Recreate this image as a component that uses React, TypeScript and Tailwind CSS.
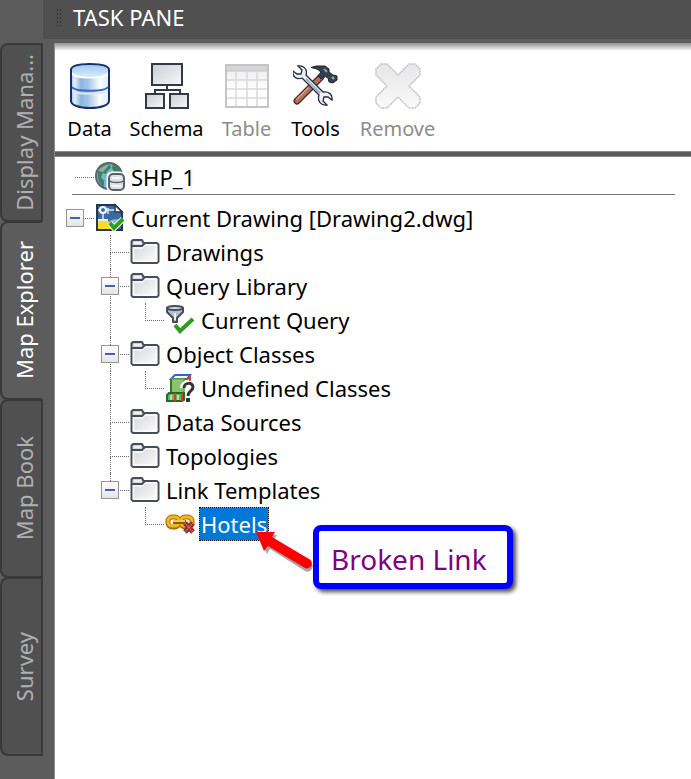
import type { ReactNode } from "react";

/* ---------- toolbar icons ---------- */

function DataIcon() {
  return (
    <svg width="42" height="48" viewBox="0 0 42 48" aria-hidden="true">
      <defs>
        <linearGradient id="cyl" x1="0" x2="1" y1="0" y2="0">
          <stop offset="0" stopColor="#a9c9ec" />
          <stop offset="0.1" stopColor="#e3f0fb" />
          <stop offset="0.26" stopColor="#8db4df" />
          <stop offset="0.45" stopColor="#a4c5e8" />
          <stop offset="0.75" stopColor="#fbfdff" />
          <stop offset="1" stopColor="#dfeaf6" />
        </linearGradient>
        <linearGradient id="cylTop" x1="0" x2="0" y1="0" y2="1">
          <stop offset="0" stopColor="#9cc6f2" />
          <stop offset="1" stopColor="#d9ecfd" />
        </linearGradient>
      </defs>
      <path d="M2 8v31c0 4 8 7 19 7s19-3 19-7V8z" fill="url(#cyl)" />
      <path d="M3 10c2 6 34 6 36 0" fill="none" stroke="#ffffff" strokeWidth="4" />
      <path d="M2 8c0-4 8-6 19-6s19 2 19 6-8 7-19 7-19-3-19-7z" fill="url(#cylTop)" />
      <path d="M3 25c3 5 33 5 36 0" fill="none" stroke="#3a6cc0" strokeWidth="2" />
      <path d="M3 28c3 5 33 5 36 0" fill="none" stroke="#d9e9f8" strokeWidth="2" />
      <path d="M2 8c0-4 8-6 19-6s19 2 19 6v31c0 4-8 7-19 7S2 43 2 39z" fill="none" stroke="#17306b" strokeWidth="2" />
    </svg>
  );
}

function SchemaIcon() {
  return (
    <svg width="44" height="46" viewBox="0 0 44 46" aria-hidden="true">
      <defs>
        <linearGradient id="box" x1="0" x2="1" y1="0" y2="1">
          <stop offset="0" stopColor="#c9cdd3" />
          <stop offset="1" stopColor="#f8f8f9" />
        </linearGradient>
      </defs>
      <path d="M22 22v5M10 31v-4h25v4" fill="none" stroke="#333845" strokeWidth="2" />
      <g fill="url(#box)" stroke="#333845" strokeWidth="2">
        <rect x="7" y="1" width="30" height="21" />
        <rect x="1" y="31" width="18" height="14" />
        <rect x="25" y="31" width="18" height="14" />
      </g>
    </svg>
  );
}

function TableIcon() {
  return (
    <svg width="44" height="46" viewBox="0 0 44 46" aria-hidden="true">
      <defs>
        <linearGradient id="cells" x1="0" x2="0" y1="0" y2="1">
          <stop offset="0" stopColor="#ebebed" />
          <stop offset="0.6" stopColor="#ffffff" />
        </linearGradient>
      </defs>
      <rect x="1" y="2" width="42" height="42" fill="url(#cells)" stroke="#c5c5c5" strokeWidth="2" />
      <rect x="2" y="3" width="40" height="5" fill="#d4d5d8" />
      <path d="M2 8h40" stroke="#c2c2c2" strokeWidth="1" />
      <path d="M11 9v34M22 9v34M32 9v34M2 17h40M2 26h40M2 35h40" stroke="#d9d9da" strokeWidth="1.500" fill="none" />
    </svg>
  );
}

function ToolsIcon() {
  return (
    <svg width="46" height="42" viewBox="1 0 46 42" aria-hidden="true">
      <path d="M5 36 L29 12" stroke="#4a2722" strokeWidth="7" strokeLinecap="round" />
      <path d="M5 36 L29 12" stroke="#b4705f" strokeWidth="4.500" strokeLinecap="round" />
      <path d="M5 34 L16 23" stroke="#dda08c" strokeWidth="1.500" strokeLinecap="round" />
      <path
        d="M19 2.500 L24 1 L33 1 L37 4 L37 7 L41 10 L45 11 L45 15 L41 18 L37 17 L36 13 L32 11 L29 14 L26 11 L29 7 L25 4z"
        fill="#34404d"
        stroke="#1c2530"
        strokeLinejoin="round"
      />
      <path d="M32 4l3 3" stroke="#8d9ca9" strokeWidth="2" />
      <path d="M40 12l2 2" stroke="#a6b3be" strokeWidth="2" />
      <path
        d="M6 1 L10 5 L9 9 L5 9 L1 6 C0 12 5 15 10 13 L27 30 C25 36 29 41 35 40 L31 36 L32 32 L36 32 L40 35 C41 29 36 26 31 27 L14 10 C16 4 11 0 6 1z"
        fill="#eceff4"
        stroke="#252b42"
        strokeWidth="1.300"
      />
      <path d="M14 14 L28 28" stroke="#9fb3cf" strokeWidth="2" />
    </svg>
  );
}

function RemoveIcon() {
  return (
    <svg width="46" height="46" viewBox="0 0 46 46" aria-hidden="true">
      <defs>
        <linearGradient id="cross" x1="0" x2="0" y1="0" y2="1">
          <stop offset="0" stopColor="#e6e6e8" />
          <stop offset="1" stopColor="#fafafa" />
        </linearGradient>
      </defs>
      <path
        d="M6 1h6l11 11L34 1h6l5 5v6L34 23l11 11v6l-5 5h-6L23 34 12 45H6l-5-5v-6l11-11L1 12V6z"
        fill="url(#cross)"
        stroke="#c4c4c4"
        strokeWidth="1.500"
        strokeDasharray="2 0.600"
        strokeLinejoin="round"
      />
    </svg>
  );
}

/* ---------- tree icons ---------- */

function GlobeIcon() {
  return (
    <svg width="30" height="32" viewBox="0 0 30 32" aria-hidden="true">
      <circle cx="14" cy="15" r="13" fill="#76b4d6" stroke="#566370" strokeWidth="2" />
      <path d="M6 6c3-3 6-4 9-3l1 4-3 2-2 4-3-1-2 4 3 4v6C4 23 2 17 3 11z" fill="#44805c" />
      <path d="M18 3c4 1 7 4 8 8h-7l-2-4z" fill="#44805c" />
      <path d="M4 10c2-4 6-6 11-7l-7 8z" fill="#b9d6d0" opacity="0.6" />
      <rect x="13" y="12" width="16" height="18" rx="4" fill="#ffffff" stroke="#ffffff" strokeWidth="3" />
      <rect x="14" y="13" width="15" height="16" rx="4" fill="#dfe0e5" stroke="#5a5f6b" strokeWidth="2" />
      <path d="M15 20c2 2 11 2 13 0" fill="none" stroke="#5a5f6b" strokeWidth="1.500" />
      <path d="M17 25h9M17 17h9" stroke="#f6f6f8" strokeWidth="2" />
    </svg>
  );
}

function DrawingIcon() {
  return (
    <svg width="30" height="30" viewBox="0 0 30 30" aria-hidden="true">
      <path d="M2 2h18l7 7v18H2z" fill="#3a6a9f" />
      <path d="M2 18h11l4 3v6H2z" fill="#fbdc22" />
      <path d="M14 18c4-2 9-2 12-1v3l-8 3z" fill="#8fb6d6" />
      <path d="M2 17h11" stroke="#e7f0f7" strokeWidth="2" />
      <path d="M2 7h20M8 2v14M13 5v6" stroke="#dce9f5" strokeWidth="1.500" fill="none" />
      <circle cx="8" cy="7" r="3" fill="#3a6a9f" stroke="#ffffff" strokeWidth="2" />
      <path d="M2 2h18l7 7v18H2z" fill="none" stroke="#27364b" strokeWidth="2" />
      <path d="M20 2l7 7h-7z" fill="#ffffff" stroke="#27364b" strokeWidth="1.500" />
      <path d="M15 20l4 5 9-9" fill="none" stroke="#ffffff" strokeWidth="6" />
      <path d="M15 20l4 5 9-9" fill="none" stroke="#2e9e1c" strokeWidth="4" />
    </svg>
  );
}

function FolderIcon() {
  return (
    <svg width="30" height="26" viewBox="0 0 30 26" aria-hidden="true">
      <defs>
        <linearGradient id="folder" x1="0" x2="1" y1="0" y2="1">
          <stop offset="0" stopColor="#cfd0d6" />
          <stop offset="1" stopColor="#ffffff" />
        </linearGradient>
      </defs>
      <path
        d="M1.500 2.500 L3 1 H12 L13.500 4 H27 L28.500 5.500 V22.500 L27 24 H3 L1.500 22.500z"
        fill="url(#folder)"
        stroke="#484d58"
        strokeWidth="2"
        strokeLinejoin="round"
      />
      <path d="M3.500 22V9h9l2-3h12v16z" fill="none" stroke="#ffffff" strokeWidth="1.500" opacity="0.8" />
      <path d="M2 7h10l3-3" fill="none" stroke="#484d58" strokeWidth="2" />
      <path d="M4 4h7" stroke="#f1f1f4" strokeWidth="2" />
    </svg>
  );
}

function QueryIcon() {
  return (
    <svg width="30" height="30" viewBox="-1 0 30 30" aria-hidden="true">
      <path d="M1 3v4l6 6v4h4v-4l6-6V3z" fill="#b9bfc8" stroke="#464c58" strokeWidth="2" strokeLinejoin="round" />
      <ellipse cx="9" cy="3" rx="8" ry="2" fill="#d8dbe0" stroke="#464c58" strokeWidth="2" />
      <path d="M9 8v7" stroke="#eceef1" strokeWidth="2" />
      <path d="M9 20l5 6L27 14" fill="none" stroke="#2f9a1c" strokeWidth="4" />
    </svg>
  );
}

function ClassesIcon() {
  return (
    <svg width="30" height="30" viewBox="-1 0 30 30" aria-hidden="true">
      <path d="M5 6l4-4h15l-3 4z" fill="#ffffff" stroke="#2d66c4" strokeWidth="2" />
      <path d="M24 2v6" stroke="#d3441e" strokeWidth="2" />
      <path d="M20 6h5" stroke="#d3441e" strokeWidth="1.500" />
      <path d="M5 6h13v14H5z" fill="#8fc06c" stroke="#6d9f50" strokeWidth="1.500" />
      <path d="M5 6v13" stroke="#2c7a32" strokeWidth="2" />
      <path d="M1 22l2-2h15v7l-2 1H1z" fill="#6cb35b" stroke="#1f6b2b" strokeWidth="2" />
      <path d="M9 20v8M16 20v8" stroke="#d3441e" strokeWidth="2" />
      <path d="M12 22v5M5 22v5" stroke="#d6efc8" strokeWidth="1.500" />
      <path d="M17 15c0-6 10-6 10 0 0 4-4 3-5 8" fill="none" stroke="#ffffff" strokeWidth="6" />
      <path d="M18 15c0-6 9-6 9-1 0 4-5 4-5 9" fill="none" stroke="#303540" strokeWidth="3" />
      <rect x="20" y="25" width="4" height="4" fill="#303540" />
    </svg>
  );
}

function BrokenLinkIcon() {
  return (
    <svg width="30" height="20" viewBox="0 0 30 20" aria-hidden="true">
      <g fill="none">
        <rect x="3" y="3" width="11" height="10" rx="4" stroke="#a66d08" strokeWidth="5" />
        <rect x="16" y="3" width="11" height="10" rx="4" stroke="#a66d08" strokeWidth="5" />
        <rect x="3" y="3" width="11" height="9" rx="4" stroke="#efb91f" strokeWidth="3" />
        <rect x="16" y="3" width="11" height="9" rx="4" stroke="#efb91f" strokeWidth="3" />
        <path d="M8 8h13" stroke="#8c5c08" strokeWidth="4" />
        <path d="M8 7h12" stroke="#f3cb45" strokeWidth="2" />
      </g>
      <path d="M20 9l8 9M28 9l-8 9" stroke="#8f2b2b" strokeWidth="5" />
      <path d="M20 9l8 9M28 9l-8 9" stroke="#d87070" strokeWidth="2" strokeDasharray="1 1" />
    </svg>
  );
}

/* ---------- side tabs ---------- */

function SideTab({ label, active = false }: { label: string; active?: boolean }) {
  return (
    <button
      role="tab"
      aria-selected={active}
      className={`flex h-[179px] w-full items-center justify-center rounded-l-lg border-2 border-[#393939] pl-1 text-[22px] leading-7 ${
        active ? "border-r-transparent bg-[#5c5c5c] text-white" : "bg-[#505050] text-[#b0b0b0]"
      }`}
    >
      <span className="rotate-180 whitespace-nowrap [writing-mode:vertical-rl]">{label}</span>
    </button>
  );
}

/* ---------- toolbar ---------- */

function ToolButton({ label, icon, width, disabled }: { label: string; icon: ReactNode; width: string; disabled?: boolean }) {
  return (
    <button
      disabled={disabled}
      className={`flex flex-col items-center gap-[5px] ${width} ${disabled ? "text-[#8c8c8c]" : "text-black"}`}
    >
      <span className="flex h-12 items-center">{icon}</span>
      <span className="text-xl leading-7 whitespace-nowrap">{label}</span>
    </button>
  );
}

/* ---------- tree ---------- */

type Line = "none" | "pass" | "stub" | "tee" | "elbow";

function Guide({ line, expander }: { line: Line; expander?: string }) {
  const vTop = line === "pass" || line === "tee" || line === "elbow";
  const vBottom = line === "pass" || line === "tee";
  const across = line === "stub" || line === "tee" || line === "elbow";
  return (
    <span className="relative flex w-[35px] shrink-0 flex-col self-stretch pr-px pl-[15px]">
      <span
        className={`flex-1 border-[#6b6b6b] ${vTop ? "border-l border-dotted" : ""} ${across ? "border-b border-dotted" : ""}`}
      />
      <span className={`flex-1 border-[#6b6b6b] ${vBottom ? "border-l border-dotted" : ""}`} />
      {expander && (
        <button
          aria-label={`Collapse ${expander}`}
          className="absolute top-2 left-1.5 flex size-[18px] items-center justify-center border border-[#959595] bg-linear-to-b from-white to-[#e4e4e4]"
        >
          <span className="h-0.5 w-2.5 bg-[#4560ad]" />
        </button>
      )}
    </span>
  );
}

function Row({
  lines,
  icon,
  label,
  expandable = false,
  selected = false,
  children,
}: {
  lines: Line[];
  icon: ReactNode;
  label: string;
  expandable?: boolean;
  selected?: boolean;
  children?: ReactNode;
}) {
  return (
    <li role="treeitem" aria-selected={selected} className="relative flex h-[34px] items-center">
      {lines.map((line, i) => (
        <Guide key={i} line={line} expander={expandable && i === lines.length - 1 ? label : undefined} />
      ))}
      <span className="flex w-[30px] shrink-0 justify-center">{icon}</span>
      {selected ? (
        <span className="ml-1 border border-dotted border-black bg-[#ff9a3c]">
          <span className="block bg-[#0078d7] px-px leading-8 text-white">{label}</span>
        </span>
      ) : (
        <span className="ml-1.5 leading-8 whitespace-nowrap">{label}</span>
      )}
      {children}
    </li>
  );
}

function Callout() {
  return (
    <>
      <svg className="absolute top-5 left-[192px] z-10" width="64" height="50" viewBox="0 0 64 50" aria-hidden="true">
        <g transform="translate(2 3)" opacity="0.35">
          <path d="M4 5 L23 5 L20 10 L56 32 A5 5 0 0 1 51 41 L16 19 L13 24z" fill="#000000" />
        </g>
        <path d="M4 5 L23 5 L20 10 L57 32 A4 4 0 0 1 53 41 L16 19 L12 24z" fill="#ff0000" />
      </svg>
      <div className="absolute top-[18px] left-[253px] rounded-lg border-[6px] border-[#0000ff] bg-white pt-2 pr-5 pb-1 pl-3 text-[28px] leading-10 whitespace-nowrap text-[#800080] shadow-[3px_3px_4px_rgba(0,0,0,0.7)]">
        Broken Link
      </div>
    </>
  );
}

export default function App() {
  return (
    <div className="flex min-h-screen bg-[#5c5c5c] font-['Noto_Sans','Open_Sans',sans-serif] text-black">
      <div role="tablist" aria-orientation="vertical" className="w-[43px] shrink-0 pt-[43px]">
        <div className="flex flex-col -space-y-px">
          <SideTab label="Display Mana..." />
          <SideTab label="Map Explorer" active />
          <SideTab label="Map Book" />
          <SideTab label="Survey" />
        </div>
      </div>

      <main className="flex min-w-0 flex-1 flex-col">
        <header className="mb-1 flex h-[39px] items-center gap-[11px] bg-[#505050] pb-1.5 pl-[13px]">
          <span className="h-[18px] w-1.5 bg-[radial-gradient(circle,#2f2f2f_1px,transparent_1px)] bg-size-[3px_4px]" />
          <h1 className="text-[22px] leading-8 text-white">TASK PANE</h1>
        </header>

        <div className="ml-[11px] flex flex-1 flex-col border-l border-[#8a8a8a]">
          <div className="border-b border-[#8a8a8a] bg-white bg-linear-to-b from-[#8f8f8f] to-white to-[8px] pt-[19px] pb-2 pl-3">
            <div role="toolbar" aria-label="Task pane tools" className="flex gap-[18px]">
              <ToolButton label="Data" icon={<DataIcon />} width="w-[45px]" />
              <ToolButton label="Schema" icon={<SchemaIcon />} width="w-[73px]" />
              <ToolButton label="Table" icon={<TableIcon />} width="w-[51px]" disabled />
              <ToolButton label="Tools" icon={<ToolsIcon />} width="w-[51px]" />
              <ToolButton label="Remove" icon={<RemoveIcon />} width="w-[77px]" disabled />
            </div>
          </div>

          <div className="mt-1 flex-1 border-t border-[#8a8a8a] bg-white pt-[3px] pl-[5px] text-[22px]">
            <ul role="tree" aria-label="Map Explorer">
              <Row lines={["stub"]} icon={<GlobeIcon />} label="SHP_1" />
              <li role="separator" className="mr-4 mb-1.5 ml-3 h-px bg-[#777777]" />
              <Row lines={["stub"]} icon={<DrawingIcon />} label="Current Drawing [Drawing2.dwg]" expandable />
              <Row lines={["none", "tee"]} icon={<FolderIcon />} label="Drawings" />
              <Row lines={["none", "tee"]} icon={<FolderIcon />} label="Query Library" expandable />
              <Row lines={["none", "pass", "elbow"]} icon={<QueryIcon />} label="Current Query" />
              <Row lines={["none", "tee"]} icon={<FolderIcon />} label="Object Classes" expandable />
              <Row lines={["none", "pass", "elbow"]} icon={<ClassesIcon />} label="Undefined Classes" />
              <Row lines={["none", "tee"]} icon={<FolderIcon />} label="Data Sources" />
              <Row lines={["none", "tee"]} icon={<FolderIcon />} label="Topologies" />
              <Row lines={["none", "elbow"]} icon={<FolderIcon />} label="Link Templates" expandable />
              <Row lines={["none", "none", "elbow"]} icon={<BrokenLinkIcon />} label="Hotels" selected>
                <Callout />
              </Row>
            </ul>
          </div>
        </div>
      </main>
    </div>
  );
}
